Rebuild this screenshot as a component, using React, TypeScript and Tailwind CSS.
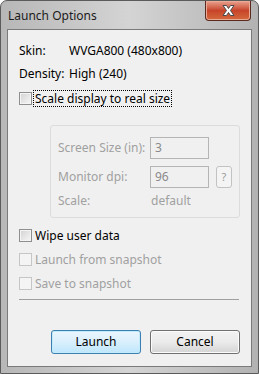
import React from "react";

const FONT = { fontFamily: '"Noto Sans", "Open Sans", sans-serif' };

function CheckBox({ label, disabled, focused }: { label: string; disabled?: boolean; focused?: boolean }) {
  return (
    <div className="flex h-[16px] items-center">
      <span
        className={`mr-[2px] box-border h-[13px] w-[13px] shrink-0 border ${
          disabled
            ? "border-[#c6c6c6] bg-[#f4f4f4]"
            : "border-[#8e8f8f] bg-gradient-to-br from-[#d2d2d2] to-[#f7f7f7] shadow-[inset_0_0_0_1px_#f4f4f4]"
        }`}
      />
      <span
        className={`px-[1px] leading-[15px] ${disabled ? "text-[#a0a0a0]" : "text-black"} ${
          focused ? "outline-1 outline-dotted outline-black" : ""
        }`}
      >
        {label}
      </span>
    </div>
  );
}

function Field({ value }: { value: string }) {
  return (
    <div className="box-border flex h-[22px] w-[59px] items-center border border-[#b5b5b5] bg-[#f0f0f0] pl-[4px] text-[#8a8a8a]">
      {value}
    </div>
  );
}

export default function App() {
  return (
    <div
      style={FONT}
      className="box-border flex h-[374px] w-[259px] flex-col rounded-t-[7px] border border-[#5b5b5b] bg-gradient-to-r from-[#b7b7b7] via-[#d4d4d4] to-[#b2b2b2] px-[6px] pb-[6px] text-[12px]"
    >
      {/* title bar */}
      <div className="flex h-[28px] shrink-0 items-start justify-between">
        <span className="mt-[6px] pl-[1px] text-[12px] text-[#1b1b1b]">Launch Options</span>
        <div className="mr-[1px] box-border flex h-[20px] w-[46px] items-center justify-center rounded-b-[4px] border border-t-0 border-[#5b2a1f] bg-gradient-to-b from-[#e8a18f] via-[#c7442a] to-[#d4693c] shadow-[inset_0_0_0_1px_#e9aa96]">
          <svg width="15" height="13" viewBox="0 0 15 13">
            <path
              d="M2 1.5 L5.5 1.5 L7.5 4.5 L9.5 1.5 L13 1.5 L9.5 6.5 L13 11.5 L9.5 11.5 L7.5 8.5 L5.5 11.5 L2 11.5 L5.5 6.5 Z"
              fill="#ffffff"
              stroke="#4a4a4a"
              strokeWidth="1"
              strokeLinejoin="round"
            />
          </svg>
        </div>
      </div>

      {/* client area */}
      <div className="box-border flex flex-1 flex-col border border-[#7a7a7a] bg-[#f0f0f0] pl-[11px] pt-[13px] text-black">
        <div className="flex h-[16px] items-center leading-[16px]">
          <span className="w-[50px]">Skin:</span>
          <span>WVGA800 (480x800)</span>
        </div>
        <div className="mt-[7px] flex h-[16px] items-center leading-[16px]">
          <span className="w-[50px]">Density:</span>
          <span>High (240)</span>
        </div>
        <div className="mt-[8px]">
          <CheckBox label="Scale display to real size" focused />
        </div>

        {/* disabled group */}
        <div className="ml-[31px] mt-[19px] box-border flex h-[93px] w-[190px] flex-col rounded-[3px] border border-[#dcdcdc] pl-[7px] pt-[11px] text-[#a0a0a0]">
          <div className="flex items-center">
            <span className="w-[92px]">Screen Size (in):</span>
            <Field value="3" />
          </div>
          <div className="mt-[7px] flex items-center">
            <span className="w-[92px]">Monitor dpi:</span>
            <Field value="96" />
            <div className="ml-[7px] box-border flex h-[22px] w-[16px] items-center justify-center rounded-[3px] border border-[#c2c2c2] bg-[#f4f4f4] text-[11px] text-[#9a9a9a]">
              ?
            </div>
          </div>
          <div className="mt-[5px] flex h-[16px] items-center">
            <span className="w-[93px]">Scale:</span>
            <span>default</span>
          </div>
        </div>

        <div className="mt-[9px]">
          <CheckBox label="Wipe user data" />
        </div>
        <div className="mt-[8px]">
          <CheckBox label="Launch from snapshot" disabled />
        </div>
        <div className="mt-[8px]">
          <CheckBox label="Save to snapshot" disabled />
        </div>

        <div className="mt-[8px] h-px w-[220px] bg-[#a0a0a0]" />

        <div className="ml-[32px] mt-[30px] flex gap-[9px]">
          <button className="box-border h-[24px] w-[90px] rounded-[3px] border border-[#3c7fb1] bg-gradient-to-b from-[#eaf6fd] via-[#d9f0fc] to-[#bee6fd] text-[12px] text-black shadow-[inset_0_0_0_1px_#c2ecfb]">
            Launch
          </button>
          <button className="box-border h-[24px] w-[90px] rounded-[3px] border border-[#707070] bg-gradient-to-b from-[#f2f2f2] via-[#ebebeb] to-[#d4d4d4] text-[12px] text-black shadow-[inset_0_0_0_1px_#fbfbfb]">
            Cancel
          </button>
        </div>
      </div>
    </div>
  );
}
